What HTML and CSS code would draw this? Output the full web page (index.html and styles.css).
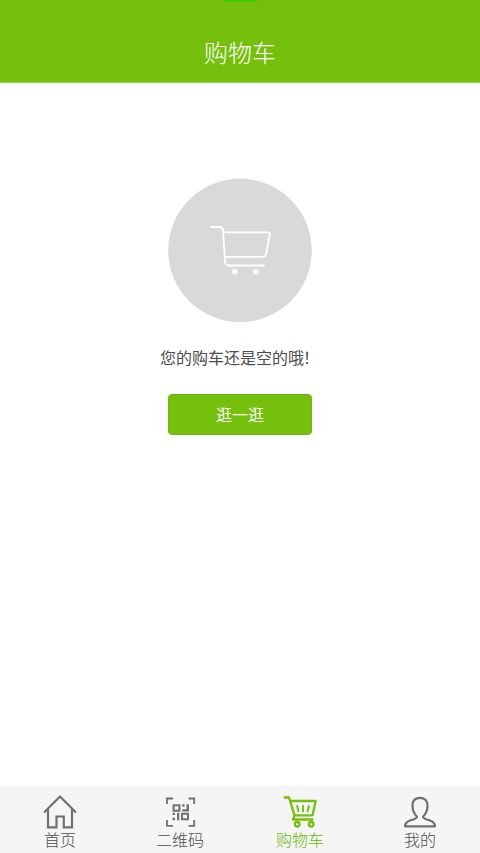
FILE: index.html
```html
<!DOCTYPE html>
<html lang="zh-CN">
<head>
<meta charset="utf-8">
<title>购物车</title>
<link rel="stylesheet" href="styles.css">
</head>
<body>
<div class="app">
  <header class="header"><span class="notch"></span><h1 class="title">购物车</h1></header>
  <main class="empty">
    <svg class="disc" viewBox="168 178 144 145" fill="none" stroke="#fff" stroke-width="1.8" stroke-linecap="round" stroke-linejoin="round">
      <circle cx="240" cy="250.400" r="71.800" fill="#d9d9d9" stroke="none"/>
      <path d="M211 227H219.500Q222.500 227 223 230L225 261.500Q225.500 265.500 229.500 265.500H264M223.500 232.300H268Q270.200 232.300 269.800 234.500L266.200 253.500Q265.500 256.800 262 256.800H225"/>
      <g fill="#fff" stroke="none"><circle cx="234.800" cy="271.700" r="2.800"/><circle cx="255.800" cy="271.700" r="2.800"/></g>
    </svg>
    <p class="message">您的购车还是空的哦<span class="mark">！</span></p>
    <button class="browse" type="button">逛一逛</button>
  </main>
  <nav class="tabs">
    <a class="tab">
      <svg class="icon" viewBox="0 0 40 36" fill="none" stroke="#707070" stroke-width="2.200">
        <path d="M4 19.500 20 3.500 36 19.500M8 16V34.300H16.500V23.500H23.800V34.300H32V16"/>
      </svg>
      <span>首页</span>
    </a>
    <a class="tab">
      <svg class="icon" viewBox="0 0 40 36" fill="none" stroke="#707070" stroke-width="1.800">
        <path d="M7 11V5.500H13M28.500 5.500H34.200V11M34.200 27V32.800H28.500M13 32.800H7V27"/>
        <path stroke-width="2" d="M13.600 12.300H19.400V17.700H13.600ZM22 20.700H28V26.200H22Z"/>
        <path fill="#707070" stroke="none" d="M22.300 11.300H24.500V13.700H22.300ZM26.600 11.300H29V18.500H22.300V16.200H26.600ZM12.600 19.700H15V22H12.600ZM17 19.700H19.300V27.200H17ZM12.600 24.700H15V27.200H12.600Z"/>
      </svg>
      <span>二维码</span>
    </a>
    <a class="tab active">
      <svg class="icon" viewBox="0 0 40 36" fill="none" stroke="#75c00d" stroke-width="2.300" stroke-linejoin="round">
        <path d="M3.700 4.500H9L14.500 22.300H32.500L35.700 8H10M14.500 22.300 13 26.500H33.500"/>
        <path stroke-width="2" d="M17 12.300 18.500 19M23 12.300V19M29 12.300 27.500 19"/>
        <circle cx="17.200" cy="31.300" r="2.300"/><circle cx="31.200" cy="31.300" r="2.300"/>
      </svg>
      <span>购物车</span>
    </a>
    <a class="tab">
      <svg class="icon" viewBox="0 0 40 36" fill="none" stroke="#707070" stroke-width="2.200" stroke-linejoin="round">
        <path d="M17 23.500C14 21 12.500 17 12.500 12.500C12.500 7.500 15.500 4.800 20 4.800S27.500 7.500 27.500 12.500C27.500 17 26 21 23 23.500C23 26 26 26.300 30 27.500C33.500 28.700 35 30 35 33.300H5C5 30 6.500 28.700 10 27.500C14 26.300 17 26 17 23.500Z"/>
      </svg>
      <span>我的</span>
    </a>
  </nav>
</div>
</body>
</html>
```
FILE: styles.css
```css
* { box-sizing: border-box; }
body { margin: 0; background: #fff; font-family: "Noto Sans CJK SC", sans-serif; }
.app { height: 853px; display: flex; flex-direction: column; overflow: hidden; }
.header {
  height: 83px;
  flex: none;
  display: flex;
  flex-direction: column;
  align-items: center;
  background: #75c00d;
  border-bottom: 1px solid #9ed255;
}
.notch { width: 33px; height: 2px; background: #45c400; }
.title { margin: 32px 0 0; font-size: 24px; line-height: 36px; font-weight: 300; color: #fff; }
.empty { flex: 1; display: flex; flex-direction: column; align-items: center; padding-top: 95px; }
.disc { display: block; width: 144px; height: 145px; }
.message { margin: 22px 0 0; font-size: 16px; line-height: 24px; color: #4c4c4c; white-space: nowrap; }
.mark { margin: 0 1px 0 -1px; }
.browse {
  width: 144px;
  height: 41px;
  margin-top: 25px;
  padding: 0 0 2px;
  border: 1px solid #6eb80b;
  border-radius: 4px;
  background: #75c00d;
  color: #fff;
  font: 350 16px/36px "Noto Sans CJK SC", sans-serif;
}
.tabs { height: 67px; flex: none; display: flex; background: #f5f5f5; }
.tab {
  flex: 1;
  display: flex;
  flex-direction: column;
  align-items: center;
  padding-top: 7px;
  font-size: 16px;
  line-height: 20px;
  font-weight: 300;
  color: #4c4c4c;
}
.icon { width: 40px; height: 36px; flex: none; }
.active { color: #67b500; }
```
